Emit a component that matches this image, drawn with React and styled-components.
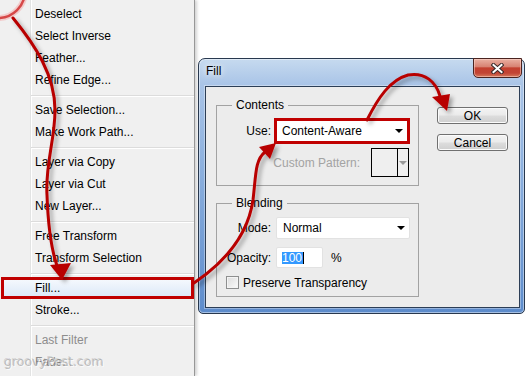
import React from 'react'
import styled, { createGlobalStyle, css } from 'styled-components'

const UI_FONT = `"Liberation Sans", Arial, sans-serif`

const GlobalStyle = createGlobalStyle`
  body {
    margin: 0;
    background: #fff;
    overflow: hidden;
  }
`

const Page = styled.div`
  position: relative;
  display: flex;
  width: 528px;
  height: 376px;
  overflow: hidden;
  background: #fff;
  font-family: ${UI_FONT};
  font-size: 12px;
  color: #000;
`

/* ---------- context menu ---------- */

const Menu = styled.div`
  box-sizing: border-box;
  flex: none;
  width: 195px;
  height: 376px;
  padding-top: 3px;
  border-right: 1px solid #979797;
  box-shadow: 2px 0 3px rgba(0, 0, 0, 0.18);
  background: linear-gradient(
    to right,
    #f0f0f0 30px,
    #e2e3e3 30px,
    #e2e3e3 31px,
    #fff 31px,
    #fff 32px,
    #f0f0f0 32px
  );
`

const MenuItem = styled.div`
  box-sizing: border-box;
  height: 22px;
  display: flex;
  align-items: center;
  padding-left: 35px;
  white-space: nowrap;
  color: ${p => (p.$disabled ? '#8d8d8d' : '#000')};
  ${p =>
    p.$marked &&
    css`
      margin-left: 1px;
      padding-left: 31px;
      border: 3px solid #c00000;
      background: linear-gradient(#f4f8fd, #dde9f8);
    `}
`

const MenuSeparator = styled.div`
  height: 8px;
  margin-left: 31px;
  display: flex;
  align-items: center;
  &::before {
    content: '';
    flex: 1;
    height: 1px;
    background: #dcdcdc;
    box-shadow: 0 1px 0 #fff;
  }
`

/* ---------- fill dialog ---------- */

const Desktop = styled.div`
  flex: 1;
  padding: 58px 0 0 3px;
`

const Window = styled.div`
  box-sizing: border-box;
  width: 327px;
  height: 256px;
  display: flex;
  flex-direction: column;
  border: 1px solid #28384e;
  border-radius: 7px 7px 5px 5px;
  background: linear-gradient(
    to bottom,
    #c6daef 0px,
    #a9c4e7 26px,
    #8cb0de 110px,
    #5c8bcb 256px
  );
  box-shadow: inset 0 0 0 1px rgba(255, 255, 255, 0.45);
`

const TitleBar = styled.div`
  height: 27px;
  display: flex;
  justify-content: space-between;
  align-items: flex-start;
`

const Title = styled.div`
  margin: 5px 0 0 7px;
  line-height: 15px;
  text-shadow: 0 0 6px #fff, 0 0 10px #fff;
`

const CloseButton = styled.div`
  box-sizing: border-box;
  width: 49px;
  height: 20px;
  margin: -1px 2px 0 0;
  display: flex;
  align-items: center;
  justify-content: center;
  border: 1px solid #4a2420;
  border-radius: 0 0 5px 5px;
  background: linear-gradient(
    #eab0a2 0%,
    #d88373 42%,
    #c3402f 50%,
    #c24434 78%,
    #d57a5c 100%
  );
  box-shadow: inset 0 0 0 1px rgba(255, 220, 210, 0.5);
`

const Client = styled.div`
  box-sizing: border-box;
  height: 222px;
  margin: 0 4px 0 6px;
  padding: 11px 0 0 10px;
  display: flex;
  border: 1px solid #2c3e56;
  background: #ececec;
  box-shadow: 0 0 0 1px rgba(255, 255, 255, 0.35);
`

const GroupColumn = styled.div`
  width: 203px;
  display: flex;
  flex-direction: column;
  gap: 10px;
`

const Group = styled.fieldset`
  box-sizing: border-box;
  height: ${p => p.$height}px;
  margin: 0;
  padding: 0;
  min-width: 0;
  border: 1px solid #a2a2a2;
`

const Legend = styled.legend`
  margin-left: 15px;
  padding: 0 4px;
  line-height: 14px;
`

const Row = styled.div`
  display: flex;
  align-items: center;
  height: ${p => p.$height}px;
  margin-top: ${p => p.$top}px;
  padding-left: ${p => p.$indent || 0}px;
  justify-content: ${p => (p.$end ? 'flex-end' : 'flex-start')};
  padding-right: ${p => (p.$end ? 9 : 0)}px;
  gap: ${p => p.$gap || 0}px;
`

const Label = styled.span`
  width: 54px;
  padding-right: 3px;
  text-align: right;
  color: ${p => (p.$disabled ? '#a3a3a3' : '#000')};
`

const Select = styled.div`
  box-sizing: border-box;
  height: 100%;
  display: flex;
  align-items: center;
  justify-content: space-between;
  background: #fff;
  padding: 0 4px 0 ${p => (p.$marked ? 5 : 6)}px;
  ${p =>
    p.$marked
      ? css`
          width: 136px;
          border: 3px solid #c00000;
        `
      : css`
          width: 134px;
          margin-left: 2px;
          border: 1px solid #e2e2e2;
          border-radius: 2px;
        `}
`

const Caret = styled.span`
  width: 0;
  height: 0;
  border-left: 4px solid transparent;
  border-right: 4px solid transparent;
  border-top: 4px solid ${p => p.$color || '#000'};
`

const DisabledText = styled.span`
  color: #a3a3a3;
`

const Swatch = styled.div`
  box-sizing: border-box;
  width: 38px;
  height: 29px;
  display: flex;
  border: 1px solid #000;
  background: #efefef;
`

const SwatchArrow = styled.div`
  width: 10px;
  display: flex;
  align-items: center;
  justify-content: center;
  margin-left: auto;
  border-left: 1px solid #000;
`

const TextInput = styled.div`
  box-sizing: border-box;
  width: 47px;
  height: 100%;
  margin-left: 2px;
  padding-left: 5px;
  display: flex;
  align-items: center;
  background: #fff;
  border: 1px solid #e2e2e2;
  border-radius: 2px;
`

const Selected = styled.span`
  background: #3399ff;
  color: #fff;
  line-height: 12px;
  padding-right: 1px;
  border-right: 1px solid #000;
`

const Unit = styled.span`
  margin-left: 8px;
`

const Checkbox = styled.span`
  box-sizing: border-box;
  width: 13px;
  height: 13px;
  border: 1px solid #8e8f8f;
  background: linear-gradient(135deg, #dcdcdc, #fbfbfb);
  box-shadow: inset 0 0 0 1px #f4f4f4;
`

const ButtonColumn = styled.div`
  margin-left: 18px;
  padding-top: 9px;
  display: flex;
  flex-direction: column;
  gap: 10px;
`

const Button = styled.div`
  box-sizing: border-box;
  width: 71px;
  height: 17px;
  display: flex;
  align-items: center;
  justify-content: center;
  border: 1px solid #707070;
  border-radius: 3px;
  background: linear-gradient(#f3f3f3 0%, #ebebeb 48%, #dddddd 52%, #cfcfcf 100%);
  box-shadow: inset 0 0 0 1px #fbfbfb;
`

/* ---------- annotations ---------- */

const Overlay = styled.svg`
  position: absolute;
  left: 0;
  top: 0;
  pointer-events: none;
`

const Watermark = styled.span`
  position: absolute;
  left: 4px;
  bottom: 7px;
  font-family: "DejaVu Sans", Verdana, sans-serif;
  font-size: 12.5px;
  color: rgba(140, 140, 140, 0.5);
  text-shadow: 1px 1px 0 rgba(255, 255, 255, 0.7), -1px -1px 0 rgba(0, 0, 0, 0.12);
`

const menuItems = [
  ['Deselect'],
  ['Select Inverse'],
  ['Feather...'],
  ['Refine Edge...'],
  '-',
  ['Save Selection...'],
  ['Make Work Path...'],
  '-',
  ['Layer via Copy'],
  ['Layer via Cut'],
  ['New Layer...'],
  '-',
  ['Free Transform'],
  ['Transform Selection'],
  '-',
  ['Fill...', 'marked'],
  ['Stroke...'],
  '-',
  ['Last Filter', 'disabled'],
  ['Fade...', 'disabled'],
]

const RED = '#b80000'

const Arrow = ({ d, head }) => (
  <g filter="url(#shade)">
    <path d={d} fill="none" stroke={RED} strokeWidth="3" strokeLinecap="round" />
    <polygon points={head} fill={RED} />
  </g>
)

const Annotations = () => (
  <Overlay width="528" height="376" viewBox="0 0 528 376">
    <defs>
      <filter id="shade" x="-20%" y="-20%" width="140%" height="140%">
        <feDropShadow dx="3" dy="3" stdDeviation="2" floodColor="#000" floodOpacity="0.35" />
      </filter>
    </defs>
    <circle cx="-2" cy="-9" r="27" fill="none" stroke="#f3b3b3" strokeWidth="6" opacity="0.6" />
    <circle cx="-2" cy="-9" r="27" fill="none" stroke="#d64848" strokeWidth="2.5" />
    <Arrow
      d="M 13 18 C 35 45, 55 75, 55 110 C 55 140, 45 165, 47 195 C 48 225, 51 248, 57 266"
      head="50,265 71,263 62,280"
    />
    <Arrow
      d="M 194 283 C 225 262, 248 235, 253 200 C 256 175, 255 160, 265 152"
      head="259,147 270,159 276,143"
    />
    <Arrow
      d="M 367 120 C 378 98, 390 80, 408 75 C 425 72, 436 82, 440 96"
      head="432,97 450,94 447,111"
    />
  </Overlay>
)

const CloseGlyph = () => (
  <svg width="13" height="11" viewBox="0 0 13 11">
    <path d="M2.5 2 L10.5 9 M10.5 2 L2.5 9" stroke="#3a2a2a" strokeWidth="4" strokeLinecap="square" />
    <path d="M2.5 2 L10.5 9 M10.5 2 L2.5 9" stroke="#fff" strokeWidth="2" strokeLinecap="square" />
  </svg>
)

export default function App() {
  return (
    <Page>
      <GlobalStyle />
      <Menu>
        {menuItems.map((item, i) =>
          item === '-' ? (
            <MenuSeparator key={i} />
          ) : (
            <MenuItem key={i} $marked={item[1] === 'marked'} $disabled={item[1] === 'disabled'}>
              {item[0]}
            </MenuItem>
          )
        )}
      </Menu>
      <Desktop>
        <Window>
          <TitleBar>
            <Title>Fill</Title>
            <CloseButton>
              <CloseGlyph />
            </CloseButton>
          </TitleBar>
          <Client>
            <GroupColumn>
              <Group $height={88}>
                <Legend>Contents</Legend>
                <Row $height={26} $top={6}>
                  <Label>Use:</Label>
                  <Select $marked>
                    Content-Aware
                    <Caret />
                  </Select>
                </Row>
                <Row $height={29} $top={4} $end $gap={11}>
                  <DisabledText>Custom Pattern:</DisabledText>
                  <Swatch>
                    <SwatchArrow>
                      <Caret $color="#9a9a9a" />
                    </SwatchArrow>
                  </Swatch>
                </Row>
              </Group>
              <Group $height={101}>
                <Legend>Blending</Legend>
                <Row $height={22} $top={7}>
                  <Label>Mode:</Label>
                  <Select>
                    Normal
                    <Caret />
                  </Select>
                </Row>
                <Row $height={21} $top={8}>
                  <Label>Opacity:</Label>
                  <TextInput>
                    <Selected>100</Selected>
                  </TextInput>
                  <Unit>%</Unit>
                </Row>
                <Row $height={13} $top={8} $indent={9} $gap={4}>
                  <Checkbox />
                  Preserve Transparency
                </Row>
              </Group>
            </GroupColumn>
            <ButtonColumn>
              <Button>OK</Button>
              <Button>Cancel</Button>
            </ButtonColumn>
          </Client>
        </Window>
      </Desktop>
      <Annotations />
      <Watermark>groovyPost.com</Watermark>
    </Page>
  )
}
